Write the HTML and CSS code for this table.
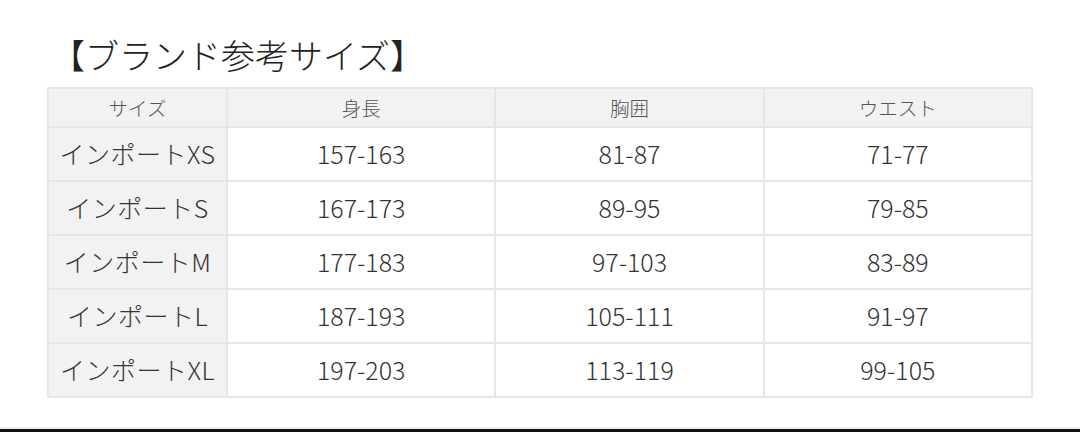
FILE: index.html
```html
<!DOCTYPE html>
<html lang="ja">
<head>
<meta charset="utf-8">
<link rel="stylesheet" href="styles.css">
</head>
<body>
<div class="page">
  <h1 class="title">【ブランド参考サイズ】</h1>
  <table class="size-table">
    <thead>
      <tr><th class="c1">サイズ</th><th>身長</th><th>胸囲</th><th>ウエスト</th></tr>
    </thead>
    <tbody>
      <tr><th class="c1">インポートXS</th><td>157-163</td><td>81-87</td><td>71-77</td></tr>
      <tr><th class="c1">インポートS</th><td>167-173</td><td>89-95</td><td>79-85</td></tr>
      <tr><th class="c1">インポートM</th><td>177-183</td><td>97-103</td><td>83-89</td></tr>
      <tr><th class="c1">インポートL</th><td>187-193</td><td>105-111</td><td>91-97</td></tr>
      <tr><th class="c1">インポートXL</th><td>197-203</td><td>113-119</td><td>99-105</td></tr>
    </tbody>
  </table>
</div>
<div class="bottom-bar"></div>
</body>
</html>
```
FILE: styles.css
```css
html, body {
  margin: 0;
  padding: 0;
  background: #fff;
}
body {
  width: 1080px;
  height: 432px;
  overflow: hidden;
  position: relative;
  font-family: "Noto Sans CJK JP", "Noto Sans", sans-serif;
  color: #333;
}
.page {
  padding: 30px 0 0 47px;
}
.title {
  margin: 0 0 0 4px;
  font-size: 34px;
  font-weight: 300;
  line-height: 50px;
  height: 57px;
  color: #222;
}
.size-table {
  border-collapse: collapse;
  width: 986px;
  table-layout: fixed;
}
.size-table th, .size-table td {
  border: 2px solid #e6e6e6;
  text-align: center;
  font-weight: 300;
  padding: 0;
}
.size-table thead th {
  background: #f2f2f2;
  height: 37px;
  font-size: 19.5px;
  color: #555;
}
.size-table tbody th, .size-table tbody td {
  height: 49px;
  padding-bottom: 3px;
  font-size: 25px;
  color: #333;
}
.size-table tbody th {
  background: #f2f2f2;
  letter-spacing: 0.5px;
}
.size-table .c1 {
  width: 177px;
}
.bottom-bar {
  position: absolute;
  left: 0;
  right: 0;
  bottom: 0;
  height: 3px;
  background: #111;
  border-top: 2px solid #eee;
}
```
